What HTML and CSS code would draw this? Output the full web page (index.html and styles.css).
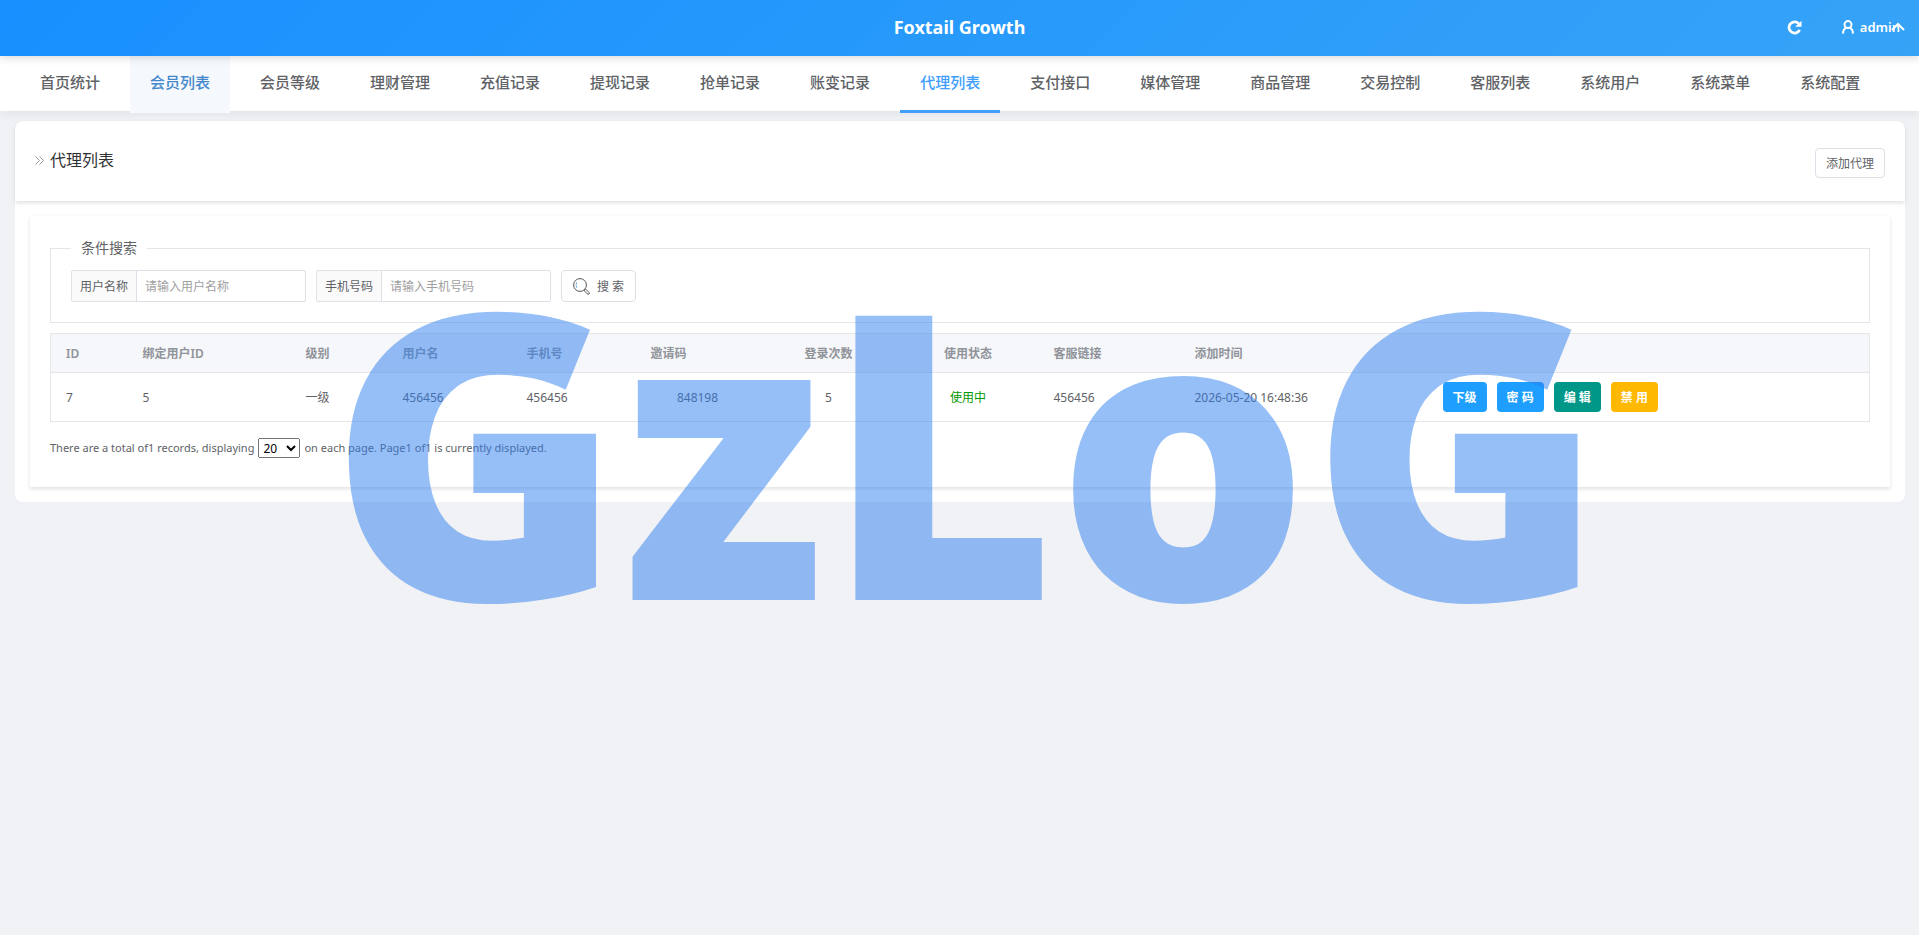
FILE: index.html
```html
<!DOCTYPE html>
<html lang="zh-CN">
<head>
  <meta charset="UTF-8">
  <meta name="viewport" content="width=device-width, initial-scale=1.0">
  <title>代理列表 - Foxtail Growth</title>
  <link rel="stylesheet" href="styles.css">
</head>
<body>

  <!-- Header -->
  <header class="header">
    <div class="brand">Foxtail Growth</div>
    <div class="header-right">
      <button class="icon-btn" type="button" aria-label="刷新">
        <svg width="15" height="15" viewBox="0 0 14 14" fill="none" stroke="#fff" stroke-width="2.6">
          <path d="M11.8 9.2A5.2 5.2 0 1 1 10.9 3.4"/>
          <path d="M13.6 0.6V6.4H7.6Z" fill="#fff" stroke="none"/>
        </svg>
      </button>
      <a class="user" href="#">
        <svg width="12" height="14" viewBox="0 0 12 14" fill="none" stroke="#fff" stroke-width="2">
          <circle cx="6" cy="4.6" r="3.5"/>
          <path d="M3.9 7.6Q1.2 9.4 1 13.6M8.1 7.6Q10.8 9.4 11 13.6"/>
        </svg>
        <span>admin</span>
        <svg class="caret" width="14" height="10" viewBox="0 0 14 10" fill="none" stroke="#fff" stroke-width="2">
          <path d="M1 8L7 2L13 8"/>
        </svg>
      </a>
    </div>
  </header>

  <!-- Navigation -->
  <nav class="nav">
    <a href="#">首页统计</a>
    <a href="#" class="hover">会员列表</a>
    <a href="#">会员等级</a>
    <a href="#">理财管理</a>
    <a href="#">充值记录</a>
    <a href="#">提现记录</a>
    <a href="#">抢单记录</a>
    <a href="#">账变记录</a>
    <a href="#" class="active">代理列表</a>
    <a href="#">支付接口</a>
    <a href="#">媒体管理</a>
    <a href="#">商品管理</a>
    <a href="#">交易控制</a>
    <a href="#">客服列表</a>
    <a href="#">系统用户</a>
    <a href="#">系统菜单</a>
    <a href="#">系统配置</a>
  </nav>

  <!-- Content -->
  <main class="card">
    <div class="card-header">
      <h1 class="card-title">
        <svg width="9" height="9" viewBox="0 0 9 9" fill="none" stroke="#999">
          <path d="M0.5 0.5L4.5 4.5L0.5 8.5M4.5 0.5L8.5 4.5L4.5 8.5"/>
        </svg>
        代理列表
      </h1>
      <button class="btn btn-plain" type="button">添加代理</button>
    </div>

    <div class="card-body">
      <form class="search-form">
        <fieldset class="search">
          <legend>条件搜索</legend>
          <div class="search-row">
            <div class="field">
              <label for="username">用户名称</label>
              <input type="text" id="username" placeholder="请输入用户名称">
            </div>
            <div class="field">
              <label for="phone">手机号码</label>
              <input type="text" id="phone" placeholder="请输入手机号码">
            </div>
            <button class="btn btn-search" type="button">
              <svg width="17" height="17" viewBox="0 0 17 17" fill="none" stroke="#555">
                <circle cx="7" cy="7" r="6.4"/>
                <path d="M3.8 9.8Q2.2 7 3.8 4.2" stroke="#7ab0d8"/>
                <path d="M11.4 11.6L12.6 11L16.4 14.8Q16.4 16.2 15 16.4L11.2 12.8Z"/>
              </svg>
              <span>搜 索</span>
            </button>
          </div>
        </fieldset>
      </form>

      <table class="agents">
        <colgroup>
          <col class="col-id">
          <col class="col-bind">
          <col class="col-level">
          <col class="col-name">
          <col class="col-name">
          <col class="col-name">
          <col class="col-count">
          <col class="col-status">
          <col class="col-status">
          <col class="col-time">
          <col>
        </colgroup>
        <thead>
          <tr>
            <th>ID</th>
            <th>绑定用户ID</th>
            <th>级别</th>
            <th>用户名</th>
            <th>手机号</th>
            <th>邀请码</th>
            <th class="center">登录次数</th>
            <th class="center">使用状态</th>
            <th>客服链接</th>
            <th>添加时间</th>
            <th></th>
          </tr>
        </thead>
        <tbody>
          <tr>
            <td>7</td>
            <td>5</td>
            <td>一级</td>
            <td>456456</td>
            <td>456456</td>
            <td class="center">848198</td>
            <td class="center">5</td>
            <td class="center status">使用中</td>
            <td>456456</td>
            <td>2026-05-20 16:48:36</td>
            <td class="actions-cell">
              <div class="actions">
                <button class="btn btn-blue" type="button">下级</button>
                <button class="btn btn-blue" type="button">密 码</button>
                <button class="btn btn-green" type="button">编 辑</button>
                <button class="btn btn-orange" type="button">禁 用</button>
              </div>
            </td>
          </tr>
        </tbody>
      </table>

      <div class="pager">
        <label for="page-size">There are a total of1 records, displaying</label>
        <select id="page-size">
          <option>20</option>
          <option>50</option>
        </select>
        <span>on each page. Page1 of1 is currently displayed.</span>
      </div>
    </div>
  </main>

  <div class="watermark">GzLoG</div>

</body>
</html>
```

FILE: styles.css
```css
* {
  box-sizing: border-box;
}

body {
  margin: 0;
  min-height: 100vh;
  background-color: #f0f2f5;
  color: #606266;
  font-family: "Noto Sans", "Noto Sans CJK SC", sans-serif;
  font-size: 12px;
  line-height: 20px;
}

button,
input {
  font-family: inherit;
  font-size: 12px;
}

a {
  color: inherit;
  text-decoration: none;
}

/* Header */
.header {
  position: relative;
  z-index: 2;
  display: grid;
  grid-template-columns: 1fr auto 1fr;
  align-items: center;
  height: 56px;
  padding: 0 14px 2px;
  background: linear-gradient(135deg, #1890ff, #36a3f7);
  color: #fff;
  box-shadow: 0 2px 8px rgba(0, 0, 0, 0.15);
}

.brand {
  grid-column: 2;
  font-size: 18px;
  font-weight: 700;
}

.header-right {
  display: flex;
  justify-content: flex-end;
  align-items: center;
  gap: 40px;
}

.icon-btn {
  display: flex;
  padding: 0;
  border: none;
  background: none;
  cursor: pointer;
}

.user {
  position: relative;
  display: flex;
  align-items: center;
  gap: 6px;
  padding-right: 5px;
  font-size: 13px;
  font-weight: 600;
}

.user .caret {
  position: absolute;
  right: 0;
}

/* Navigation */
.nav {
  position: relative;
  z-index: 1;
  display: flex;
  gap: 10px;
  height: 55px;
  padding: 0 20px;
  background-color: #fff;
  box-shadow: 0 2px 12px rgba(0, 0, 0, 0.08);
}

.nav a {
  height: 57px;
  padding: 0 20px;
  border-bottom: 3px solid transparent;
  color: #606266;
  font-size: 15px;
  font-weight: 500;
  line-height: 52px;
  white-space: nowrap;
}

.nav .hover {
  background-color: #f5f9fd;
  color: #4488cc;
}

.nav .active {
  border-bottom-color: #409eff;
  color: #409eff;
}

/* Card */
.card {
  margin: 10px 14px 0 15px;
  padding-bottom: 15px;
  border-radius: 8px;
  background-color: #fff;
}

.card-header {
  display: flex;
  justify-content: space-between;
  align-items: flex-start;
  height: 80px;
  padding: 27px 20px 0;
  border-radius: 8px 8px 0 0;
  box-shadow: 0 2px 4px rgba(0, 0, 0, 0.12);
}

.card-title {
  display: flex;
  align-items: center;
  gap: 6px;
  margin: 0;
  color: #303133;
  font-size: 16px;
  font-weight: 400;
  line-height: 24px;
}

.card-body {
  margin: 15px 15px 0;
  padding: 20px 20px 29px;
  box-shadow: 0 2px 4px rgba(0, 0, 0, 0.12);
}

/* Buttons */
.btn {
  height: 30px;
  padding: 0 10px;
  border: none;
  border-radius: 4px;
  color: #fff;
  font-weight: 600;
  white-space: nowrap;
  cursor: pointer;
}

.btn-plain,
.btn-search {
  border: 1px solid #dcdfe6;
  background-color: #fff;
  color: #606266;
  font-weight: 400;
}

.btn-search {
  display: flex;
  align-items: center;
  gap: 7px;
  height: 32px;
  padding: 0 11px;
}

.btn-blue {
  background-color: #1e9fff;
}

.btn-green {
  background-color: #009688;
}

.btn-orange {
  background-color: #ffb800;
}

/* Search */
.search {
  margin: 0 0 10px;
  padding: 10px 20px 20px;
  border: 1px solid #e6e6e6;
}

.search legend {
  padding: 0 10px;
  font-size: 14px;
  line-height: 24px;
}

.search-row {
  display: flex;
  gap: 10px;
}

.field {
  display: flex;
  height: 32px;
}

.field label {
  width: 66px;
  border: 1px solid #e0e2e8;
  border-radius: 2px 0 0 2px;
  background-color: #fafafa;
  line-height: 31px;
  text-align: center;
}

.field input {
  width: 170px;
  margin-left: -1px;
  padding: 0 8px;
  border: 1px solid #dcdfe6;
  border-radius: 0 2px 2px 0;
}

.field input::placeholder {
  color: #a0a0a0;
}

/* Table */
.agents {
  width: 100%;
  table-layout: fixed;
  border: 1px solid #e6e6e6;
  border-collapse: collapse;
}

.agents th,
.agents td {
  padding: 10px 15px 8px;
  border-bottom: 1px solid #e6e6e6;
  text-align: left;
  white-space: nowrap;
}

.agents th {
  background-color: #f5f7fa;
  color: #909399;
  font-weight: 600;
}

.agents .center {
  text-align: center;
}

.agents .status {
  color: #009900;
}

.agents .actions-cell {
  padding: 9px 15px;
}

.col-id {
  width: 77px;
}

.col-bind {
  width: 163px;
}

.col-level {
  width: 97px;
}

.col-name {
  width: 124px;
}

.col-count {
  width: 138px;
}

.col-status {
  width: 141px;
}

.col-time {
  width: 248px;
}

.actions {
  display: flex;
  gap: 10px;
}

/* Pager */
.pager {
  display: flex;
  align-items: center;
  margin-top: 16px;
  font-size: 11px;
}

.pager select {
  width: 42px;
  height: 20px;
  margin: 0 4px;
  font-family: inherit;
  font-size: 12px;
}

/* Watermark */
.watermark {
  position: fixed;
  inset: 0;
  z-index: 10;
  display: flex;
  align-items: center;
  justify-content: center;
  padding: 0 0 44px 14px;
  color: rgba(45, 125, 239, 0.5);
  font-family: "Noto Sans", sans-serif;
  font-size: 398px;
  font-weight: 900;
  line-height: 1;
  pointer-events: none;
}
```
